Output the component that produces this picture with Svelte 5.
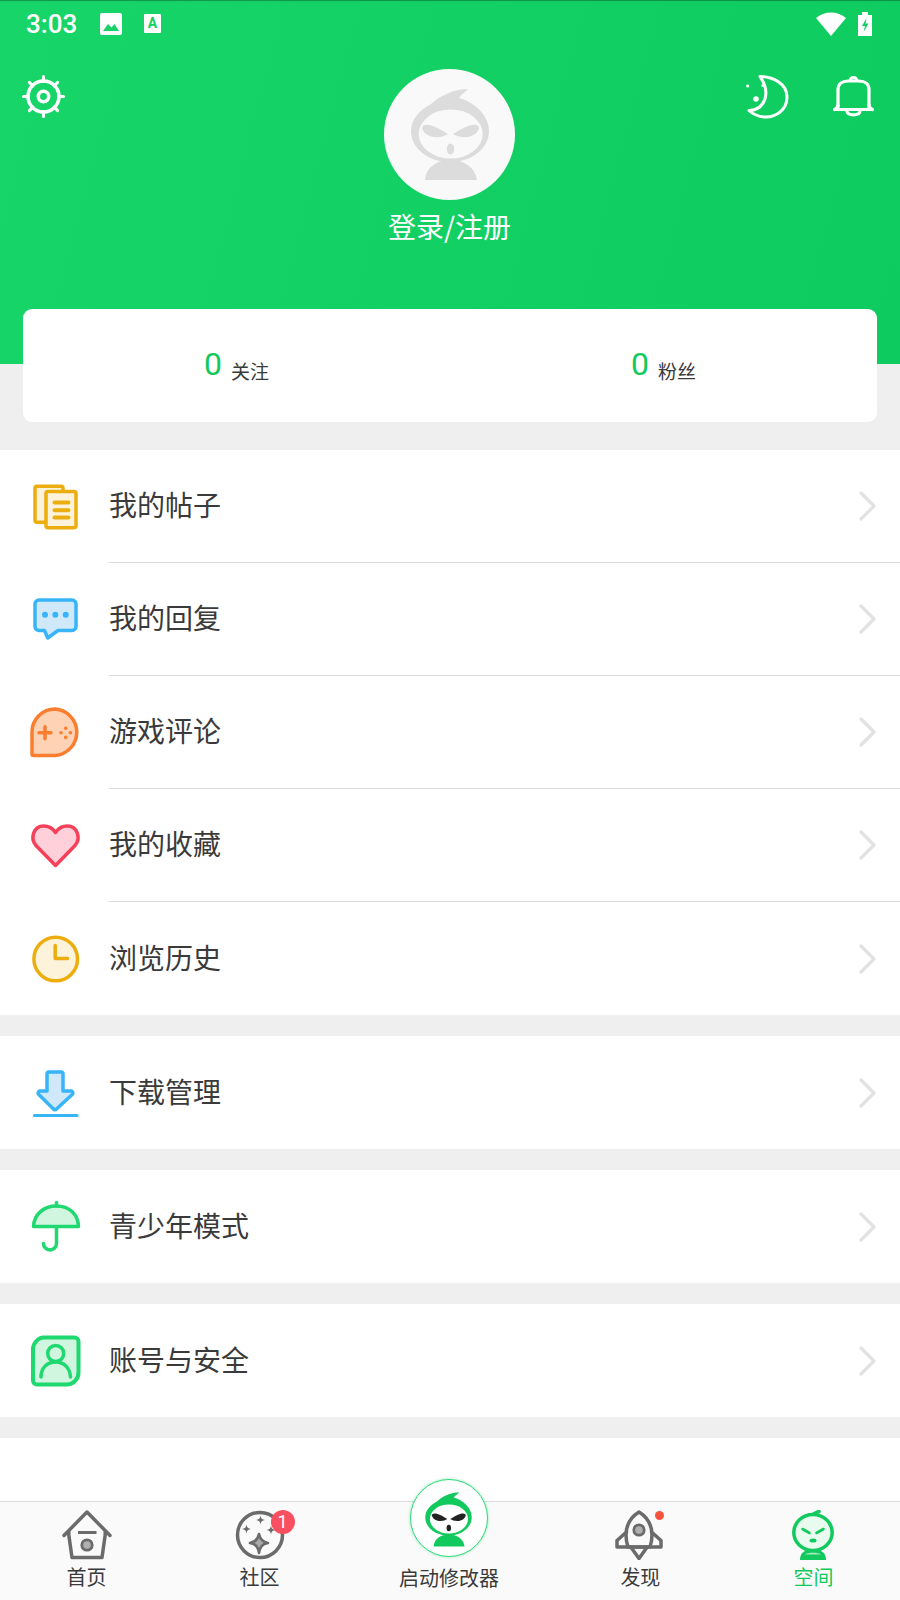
<script>
	const groups = [
		["我的帖子:docs", "我的回复:reply", "游戏评论:game", "我的收藏:heart", "浏览历史:clock"],
		["下载管理:download"],
		["青少年模式:umbrella"],
		["账号与安全:account"],
	].map((g) => g.map((s) => ({ label: s.split(":")[0], icon: s.split(":")[1] })));

	const teeth = [0, 45, 90, 135, 180, 225, 270, 315];
</script>

{#snippet mascot(ring, face, eye)}
	<svg class="mascot" viewBox="0 0 78 94">
		<path d="M20 17C30 8 44 2 57 2C54 6 50 7 48 11C60 14 78 26 78 44C78 62 60 75 39 75C18 75 0 62 0 44C0 32 9 23 20 17Z" fill={ring} />
		<ellipse cx="39.7" cy="47" rx="32" ry="24.5" fill={face} />
		<path d="M11 41C12 36 20 36 37 47C30 52 14 52 11 41Z" fill={eye} />
		<path d="M68 41C67 36 59 36 42 47C49 52 65 52 68 41Z" fill={eye} />
		<ellipse cx="39.5" cy="62" rx="3.7" ry="5.5" fill={eye} />
		<path d="M14 93C15 80 26 73 39.5 73C53 73 64 80 66 93Z" fill={ring} />
	</svg>
{/snippet}

{#snippet rowIcon(name)}
	<svg class="row-icon" viewBox="0 0 56 56">
		{#if name === "docs"}
			<g fill="#fdf3da" stroke="#ecad0e" stroke-width="3.5" stroke-linejoin="round">
				<rect x="8" y="7.2" width="28" height="36" rx="2" />
				<rect x="19" y="12.5" width="30" height="36.3" rx="2" />
			</g>
			<path d="M27.5 23.5H41.5M27.5 31.2H41.5M27.5 38.4H41.5" stroke="#ecad0e" stroke-width="4" stroke-linecap="round" />
		{:else if name === "reply"}
			<path d="M12 8H45a4 4 0 0 1 4 4V34.5a4 4 0 0 1-4 4H31L20.7 46L17.5 38.5H12a4 4 0 0 1-4-4V12a4 4 0 0 1 4-4Z" fill="#cfe9fa" stroke="#38b4f8" stroke-width="3.5" stroke-linejoin="round" />
			<g fill="#38b4f8">
				<circle cx="18" cy="22.8" r="3" />
				<circle cx="28.3" cy="22.8" r="3" />
				<circle cx="38.7" cy="22.8" r="3" />
			</g>
		{:else if name === "game"}
			<path d="M28 4a23.3 23.3 0 0 1 0 46.5H6.5q-1.5 0-1.5-1.5V27A23 23 0 0 1 28 4Z" fill="#fed2b5" stroke="#fb7d2e" stroke-width="3.5" stroke-linejoin="round" />
			<path d="M12 27.8H24M18 21.8V33.8" stroke="#fb7d2e" stroke-width="3.5" stroke-linecap="round" />
			<g fill="#fb7d2e">
				<circle cx="38.7" cy="23.2" r="1.8" />
				<circle cx="38.7" cy="32.4" r="1.8" />
				<circle cx="34" cy="27.8" r="1.8" />
				<circle cx="43.4" cy="27.8" r="1.8" />
			</g>
		{:else if name === "heart"}
			<path d="M28.5 47.5L9 27.5C2.5 20 7 8 16.5 8C21.5 8 26 10.5 28.5 14.5C31 10.5 35.5 8 40.5 8C50 8 54.5 20 48 27.5Z" fill="#ffd0da" stroke="#f5405a" stroke-width="3.5" stroke-linejoin="round" />
		{:else if name === "clock"}
			<circle cx="28.7" cy="28" r="21.8" fill="#fdf3da" stroke="#ecad0e" stroke-width="3.5" />
			<path d="M28.2 14.5V27.5H40.5" fill="none" stroke="#ecad0e" stroke-width="3.5" stroke-linecap="round" stroke-linejoin="round" />
		{:else if name === "download"}
			<path d="M22 7H34a2 2 0 0 1 2 2V26H44a2 2 0 0 1 1.5 3.2L29.5 44a2 2 0 0 1-3 0L11.5 29.2A2 2 0 0 1 13 26H20V9a2 2 0 0 1 2-2Z" fill="#cfe9fa" stroke="#38b4f8" stroke-width="3.5" stroke-linejoin="round" />
			<path d="M7.5 50.5H50" stroke="#38b4f8" stroke-width="3.2" stroke-linecap="round" />
		{:else if name === "umbrella"}
			<path d="M6.5 27.5C7 15 17 7 29.5 7C42 7 51 15 51.5 27.5Z" fill="#d0f6df" stroke="#1fd870" stroke-width="3.5" stroke-linejoin="round" />
			<path d="M29.5 3.5V7M29.5 28V44.5a6.5 6.5 0 0 1-13 0" fill="none" stroke="#1fd870" stroke-width="3.5" stroke-linecap="round" />
		{:else if name === "account"}
			<path d="M16 4.5H47.5a4 4 0 0 1 4 4V39a12 12 0 0 1-12 12.5H10a4 4 0 0 1-4-4V16A12 12 0 0 1 16 4.5Z" fill="#d0f6df" stroke="#1fd870" stroke-width="4" stroke-linejoin="round" />
			<circle cx="28.7" cy="20.5" r="8" fill="none" stroke="#1fd870" stroke-width="3.5" />
			<path d="M14 44C14 35 20 29 28.7 29C37 29 43 35 43.5 44" fill="none" stroke="#1fd870" stroke-width="3.5" stroke-linecap="round" />
		{/if}
	</svg>
{/snippet}

<div class="page">
	<header class="hero">
		<div class="status">
			<span class="time">3:03</span>
			<svg class="st-img" viewBox="0 0 22 22">
				<rect width="22" height="22" rx="2" fill="#fff" />
				<path d="M3 18L8 11L11.5 14.5L14.5 11L19 18Z" fill="#17d266" />
			</svg>
			<span class="st-a">A</span>
			<span class="spacer"></span>
			<svg class="st-wifi" viewBox="0 0 30 24"><path d="M0 6C8-1.5 22-1.5 30 6L15 24Z" fill="#fff" /></svg>
			<svg class="st-batt" viewBox="0 0 14 24">
				<path d="M4 0H10V3H14V24H0V3H4Z" fill="#fff" />
				<path d="M8.5 6L4 14H7L5.5 20L10.5 11.5H7.5Z" fill="#13cf63" />
			</svg>
		</div>
		<div class="bar">
			<svg class="gear" viewBox="0 0 43 43">
				<g fill="none" stroke="#fff" stroke-linecap="round">
					{#each teeth as t}
						<path d="M21.5 6.5V1.5" stroke-width="3" transform="rotate({t} 21.5 21.5)" />
					{/each}
					<circle cx="21.5" cy="21.5" r="15.5" stroke-width="3.5" />
					<circle cx="21.5" cy="21.5" r="5.2" stroke-width="3.5" />
				</g>
			</svg>
			<div class="profile">
				<div class="avatar">{@render mascot("#dcdcdc", "#f9f9f9", "#dcdcdc")}</div>
				<div class="login">登录/注册</div>
			</div>
			<div class="actions">
				<svg class="moon" viewBox="0 0 50 50">
					<path d="M18 4.5C32 5 45 12 45 25C45 38 34 45 24 45C18 45 12 43 7 38.5C22 38 30 22 18 4.5Z" fill="none" stroke="#fff" stroke-width="3" stroke-linejoin="round" />
					<circle cx="5.7" cy="14" r="1.6" fill="#fff" />
					<circle cx="20.7" cy="13.7" r="1.4" fill="#fff" />
					<circle cx="14" cy="27" r="2.8" fill="#fff" />
				</svg>
				<svg class="bell" viewBox="0 0 47 46">
					<g fill="none" stroke="#fff" stroke-width="3.2" stroke-linecap="round" stroke-linejoin="round">
						<path d="M8 36V18C8 12 12 9 18 9H29C35 9 39 12 39 18V36" />
						<path d="M4.5 37.5Q8 36 8 33M42.5 37.5Q39 36 39 33M4.5 37.5H42.5" />
						<path d="M17 39.5C18 44 29 44 30 39.5" />
						<path d="M20.5 8.5C20.5 4.5 26.5 4.5 26.5 8.5" />
					</g>
				</svg>
			</div>
		</div>
	</header>

	<section class="stats">
		<div class="stat"><span class="num">0</span><span class="cap">关注</span></div>
		<div class="stat"><span class="num">0</span><span class="cap">粉丝</span></div>
	</section>

	{#each groups as group}
		<ul class="group">
			{#each group as row}
				<li class="row">
					{@render rowIcon(row.icon)}
					<div class="row-body">
						<span class="row-label">{row.label}</span>
						<svg class="chev" viewBox="0 0 17 30">
							<path d="M2 2L15 15L2 28" fill="none" stroke="#e2e2e2" stroke-width="3.2" stroke-linecap="round" stroke-linejoin="round" />
						</svg>
					</div>
				</li>
			{/each}
		</ul>
	{/each}

	<div class="filler"></div>

	<nav class="tabs">
		<div class="tab">
			<svg class="tab-icon" viewBox="0 0 50 50">
				<g fill="none" stroke="#6b6b6b" stroke-width="3.5" stroke-linecap="round" stroke-linejoin="round">
					<path d="M2 25.5L25 2L48 25.5" />
					<path d="M6.8 22V25L10 47.5H40L43.2 25V22" />
				</g>
				<path d="M16 22.5H34.5" stroke="#6b6b6b" stroke-width="3" />
				<circle cx="25" cy="35" r="5.2" fill="#b0b0b0" stroke="#6b6b6b" stroke-width="2.8" />
			</svg>
			<span>首页</span>
		</div>
		<div class="tab">
			<span class="tab-wrap">
				<svg class="tab-icon" viewBox="0 0 50 50">
					<circle cx="25" cy="25" r="22.5" fill="none" stroke="#6b6b6b" stroke-width="3.5" />
					<path d="M24 24C25 29 27 32 33 33C27 34 25 37 24 43C23 37 21 34 15 33C21 32 23 29 24 24Z" fill="#a8a8a8" stroke="#6b6b6b" stroke-width="2.6" stroke-linejoin="round" />
					<g fill="#6b6b6b">
						<path d="M11.5 14.5C12 17.5 13 18.5 16 19C13 19.5 12 20.5 11.5 23.5C11 20.5 10 19.5 7 19C10 18.5 11 17.5 11.5 14.5Z" />
						<path d="M25.5 5.5C26 8.5 27 9.5 30 10C27 10.5 26 11.5 25.5 14.5C25 11.5 24 10.5 21 10C24 9.5 25 8.5 25.5 5.5Z" />
						<path d="M36 15.5C36.5 18.5 37.5 19.5 40.5 20C37.5 20.5 36.5 21.5 36 24.5C35.5 21.5 34.5 20.5 31.5 20C34.5 19.5 35.5 18.5 36 15.5Z" />
					</g>
				</svg>
				<b class="badge">1</b>
			</span>
			<span>社区</span>
		</div>
		<div class="tab tab-main">
			<span class="launch">{@render mascot("#12c95e", "#fff", "#222")}</span>
			<span>启动修改器</span>
		</div>
		<div class="tab">
			<span class="tab-wrap">
				<svg class="tab-icon" viewBox="0 0 50 50">
					<g fill="none" stroke="#6b6b6b" stroke-width="3.5" stroke-linejoin="round" stroke-linecap="round">
						<path d="M24 2C32 7 37 15 37 25C37 30 36 34 35 37H13C12 34 11 30 11 25C11 15 16 7 24 2Z" />
						<path d="M11.5 22L2 30.5V37H46V30.5L36.5 22" />
						<path d="M16.5 38L24 48.5L31.5 38" />
					</g>
					<circle cx="24" cy="20" r="5.2" fill="#b0b0b0" stroke="#6b6b6b" stroke-width="2.8" />
				</svg>
				<i class="dot"></i>
			</span>
			<span>发现</span>
		</div>
		<div class="tab active">
			<svg class="tab-icon" viewBox="0 0 50 50">
				<path d="M25 4.5C27 3 29 2 31 1.5" fill="none" stroke="#12c95e" stroke-width="3.5" stroke-linecap="round" />
				<ellipse cx="25" cy="22.5" rx="19.2" ry="18" fill="#e9fbef" stroke="#12c95e" stroke-width="3.5" />
				<path d="M14.5 19L21.5 23M35.5 19L28.5 23" stroke="#12c95e" stroke-width="2.6" stroke-linecap="round" />
				<ellipse cx="25" cy="30.5" rx="3.5" ry="2" fill="#12c95e" />
				<path d="M12 50C12 43 16 39.5 25 39.5C34 39.5 38 43 38 50Z" fill="#12c95e" />
				<path d="M17 44.5C19 42 31 42 33 44.5Z" fill="#a5ecc0" />
			</svg>
			<span>空间</span>
		</div>
	</nav>
</div>

<style>
	:global(body) {
		background: #efefef;
	}

	.page {
		width: 900px;
		height: 1600px;
		background: #efefef;
		font-family: "Noto Sans CJK SC", "Noto Sans", sans-serif;
		color: #3a3a3a;
		overflow: hidden;
		position: relative;
	}

	.hero {
		height: 364px;
		box-sizing: border-box;
		background: linear-gradient(105deg, #18d56a 0%, #0dcb5e 100%);
		box-shadow: inset 0 2px 1px -1px rgba(0, 0, 0, 0.3);
		color: #fff;
	}

	.status {
		height: 47px;
		display: flex;
		align-items: center;
		padding: 0 28px 0 26px;
		box-sizing: border-box;
	}

	.time {
		font-family: Roboto, sans-serif;
		font-weight: 500;
		font-size: 26px;
		width: 74px;
	}

	.st-img {
		width: 22px;
		height: 22px;
		margin-right: 22px;
	}

	.st-a {
		width: 17px;
		height: 19px;
		background: #fff;
		border-radius: 1px;
		color: #13cf63;
		font: 700 14px/18px Roboto, sans-serif;
		text-align: center;
	}

	.spacer {
		flex: 1;
	}

	.st-wifi {
		width: 30px;
		height: 24px;
		margin-right: 12px;
	}

	.st-batt {
		width: 14px;
		height: 24px;
	}

	.bar {
		display: grid;
		grid-template-columns: 1fr auto 1fr;
		padding: 22px 23px 0 22px;
	}

	.gear {
		width: 43px;
		height: 43px;
		margin-top: 6px;
	}

	.profile {
		display: flex;
		flex-direction: column;
		align-items: center;
	}

	.avatar {
		width: 131px;
		height: 131px;
		border-radius: 50%;
		background: #f9f9f9;
		display: flex;
		justify-content: center;
		padding-top: 18px;
		box-sizing: border-box;
	}

	.avatar :global(.mascot) {
		width: 78px;
		height: 94px;
	}

	.login {
		font-size: 28px;
		line-height: 44px;
		margin-top: 4px;
	}

	.actions {
		display: flex;
		justify-content: flex-end;
		gap: 38px;
		margin-top: 3px;
		align-items: flex-start;
	}

	.moon {
		width: 50px;
		height: 50px;
	}

	.bell {
		width: 47px;
		height: 46px;
	}

	.stats {
		margin: -55px 23px 28px;
		height: 113px;
		background: #fff;
		border-radius: 9px;
		display: grid;
		grid-template-columns: 1fr 1fr;
		position: relative;
	}

	.stat {
		display: flex;
		justify-content: center;
		align-items: flex-start;
		gap: 9px;
		padding-top: 33px;
	}

	.num {
		font-family: Roboto, sans-serif;
		font-size: 32px;
		color: #12c95e;
		line-height: 44px;
	}

	.cap {
		font-size: 19px;
		line-height: 28px;
		margin-top: 15px;
		color: #3a3a3a;
	}

	.group {
		list-style: none;
		margin: 0 0 21px;
		padding: 0;
		background: #fff;
	}

	.row {
		display: flex;
		align-items: center;
		height: 113px;
		padding-left: 27px;
	}

	.row-icon {
		width: 56px;
		height: 56px;
		margin-right: 26px;
		flex: none;
	}

	.row-body {
		flex: 1;
		height: 100%;
		box-sizing: border-box;
		display: flex;
		align-items: center;
		justify-content: space-between;
		padding-right: 24px;
		font-size: 28px;
		border-bottom: 1.5px solid #dcdcdc;
	}

	.row-label {
		margin-bottom: 4px;
	}

	.row:last-child .row-body {
		border-bottom: none;
	}

	.chev {
		width: 17px;
		height: 30px;
	}

	.filler {
		position: absolute;
		left: 0;
		right: 0;
		top: 1438px;
		height: 64px;
		background: #fff;
	}

	.tabs {
		position: absolute;
		left: 0;
		right: 0;
		top: 1501px;
		height: 99px;
		box-sizing: border-box;
		border-top: 1.5px solid #dcdcdc;
		background: #fafafa;
		display: grid;
		grid-template-columns: 1fr 1fr 1.2fr 1fr 1fr;
	}

	.tab {
		display: flex;
		flex-direction: column;
		align-items: center;
		font-size: 20px;
		line-height: 28px;
		padding-top: 8px;
		color: #3a3a3a;
	}

	.tab-icon {
		display: block;
		width: 50px;
		height: 50px;
		margin-bottom: 3px;
	}

	.tab-wrap {
		position: relative;
		display: block;
	}

	.badge {
		position: absolute;
		left: 36px;
		top: 0;
		width: 24px;
		height: 24px;
		border-radius: 50%;
		background: #f85060;
		color: #fff;
		font: 400 18px/24px Roboto, sans-serif;
		text-align: center;
	}

	.dot {
		position: absolute;
		left: 40px;
		top: 1px;
		width: 9px;
		height: 9px;
		border-radius: 50%;
		background: #f5533d;
	}

	.tab-main {
		padding-top: 0;
		padding-right: 2px;
	}

	.launch {
		box-sizing: border-box;
		width: 78px;
		height: 78px;
		margin-top: -23px;
		margin-bottom: 7px;
		border-radius: 50%;
		border: 1.5px solid #2edb78;
		box-shadow: 0 0 3px rgba(46, 219, 120, 0.5);
		background: #fff;
		display: flex;
		justify-content: center;
		padding-top: 11px;
		position: relative;
	}

	.launch :global(.mascot) {
		width: 47px;
		height: 56px;
	}

	.active {
		color: #12c95e;
	}
</style>
